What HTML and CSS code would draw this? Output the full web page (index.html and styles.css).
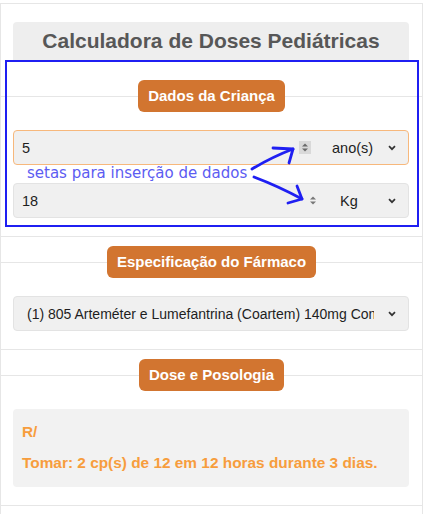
FILE: index.html
```html
<!DOCTYPE html>
<html lang="pt">
<head>
<meta charset="utf-8">
<title>Calculadora de Doses Pediátricas</title>
<link rel="stylesheet" href="styles.css">
</head>
<body>
<div class="card">
  <div class="head">
    <h1 class="title">Calculadora de Doses Pediátricas</h1>
  </div>

  <section class="sec sec-first">
    <div class="legend"><span class="badge">Dados da Criança</span></div>
    <div class="body fields">
      <div class="field field-focus">
        <div class="num">
          <span>5</span>
          <span class="spin spin-hover"><svg width="12" height="13" viewBox="0 0 12 13"><path d="M3 5.5 L6 2.5 L9 5.5 Z" fill="#6a6a6a"/><path d="M3 7.5 L6 10.5 L9 7.5 Z" fill="#6a6a6a"/></svg></span>
        </div>
        <div class="unit unit-age">
          <span>ano(s)</span>
          <svg class="chev" width="8" height="6" viewBox="0 0 8 6"><path d="M1 1.2 L4 4.2 L7 1.2" fill="none" stroke="#333" stroke-width="1.7"/></svg>
        </div>
      </div>
      <div class="field">
        <div class="num">
          <span>18</span>
          <span class="spin"><svg width="12" height="13" viewBox="0 0 12 13"><path d="M3 5.5 L6 2.5 L9 5.5 Z" fill="#777"/><path d="M3 7.5 L6 10.5 L9 7.5 Z" fill="#777"/></svg></span>
        </div>
        <div class="unit unit-weight">
          <span>Kg</span>
          <svg class="chev" width="8" height="6" viewBox="0 0 8 6"><path d="M1 1.2 L4 4.2 L7 1.2" fill="none" stroke="#333" stroke-width="1.7"/></svg>
        </div>
      </div>
    </div>
  </section>

  <section class="sec">
    <div class="legend"><span class="badge">Especificação do Fármaco</span></div>
    <div class="body">
      <div class="field drug">
        <span class="drug-text">(1) 805 Arteméter e Lumefantrina (Coartem) 140mg Comprimido</span>
        <svg class="chev" width="8" height="6" viewBox="0 0 8 6"><path d="M1 1.2 L4 4.2 L7 1.2" fill="none" stroke="#333" stroke-width="1.7"/></svg>
      </div>
    </div>
  </section>

  <section class="sec">
    <div class="legend"><span class="badge">Dose e Posologia</span></div>
    <div class="body">
      <div class="result">
        <p class="rx">R/</p>
        <p class="rx rx-line">Tomar: 2 cp(s) de 12 em 12 horas durante 3 dias.</p>
      </div>
    </div>
  </section>

  <section class="sec sec-end"></section>
</div>

<div class="note-box"></div>
<span class="note-text">setas para inserção de dados</span>
<svg class="note-arrows" width="425" height="514" viewBox="0 0 425 514">
  <g fill="none" stroke="#1f1ff2" stroke-width="2.8" stroke-linecap="round" stroke-linejoin="round">
    <path d="M252 169 Q272 157 293 149"/>
    <path d="M273 148 L293 149 L289 163"/>
    <path d="M254 177 Q278 186 302 199"/>
    <path d="M297 186 L302 199 L288 203"/>
  </g>
</svg>
</body>
</html>
```

FILE: styles.css
```css
* { box-sizing: border-box; }

body {
  margin: 0;
  background: #fff;
  font-family: "Liberation Sans", Arial, sans-serif;
  color: #222;
  position: relative;
  width: 425px;
  height: 514px;
  overflow: hidden;
}

.card {
  margin-top: 3px;
  width: 423px;
  border: 1px solid #e6e6e6;
  border-bottom: none;
}

.head {
  padding: 18px 13px 0 12px;
}

.title {
  margin: 0;
  height: 38px;
  line-height: 38px;
  background: #eeeeee;
  border-radius: 4px 4px 0 0;
  text-align: center;
  font-size: 21px;
  font-weight: bold;
  color: #575757;
}

.sec {
  border-top: 1px solid #e6e6e6;
  padding: 9px 0 18px;
}

.sec-first {
  border-top: none;
  padding-top: 20px;
}

.sec-end {
  height: 20px;
  padding: 0;
}

.legend {
  display: flex;
  align-items: center;
}

.legend::before,
.legend::after {
  content: "";
  flex: 1;
  height: 1px;
  background: #e6e6e6;
}

.badge {
  height: 32px;
  line-height: 32px;
  padding: 0 10px;
  background: #d27530;
  color: #fff;
  font-size: 15px;
  font-weight: bold;
  border-radius: 6px;
}

.body {
  padding: 18px 13px 0 12px;
}

.fields {
  display: flex;
  flex-direction: column;
  gap: 18px;
}

.field {
  height: 35px;
  display: flex;
  align-items: center;
  background: #f0f0f0;
  border: 1px solid #e3e3e3;
  border-radius: 4px;
  font-size: 14.5px;
  color: #1e1e1e;
}

.field-focus {
  border-color: #f7b87c;
}

.num {
  flex: 1;
  height: 100%;
  display: flex;
  align-items: center;
  justify-content: space-between;
  padding-left: 8px;
}

.spin {
  width: 12px;
  height: 13px;
  margin-right: 6px;
  display: flex;
}

.spin-hover {
  background: #d9d9d9;
}

.unit {
  height: 100%;
  display: flex;
  align-items: center;
  justify-content: space-between;
  padding: 0 12px 0 15px;
}

.unit-age { width: 91px; }
.unit-weight { width: 83px; }

.chev { flex: none; }

.drug {
  padding: 0 12px 0 13px;
  font-size: 14px;
}

.drug-text {
  flex: 1;
  overflow: hidden;
  white-space: nowrap;
  margin-right: 14px;
}

.result {
  background: #f2f2f2;
  border-radius: 4px;
  padding: 14px 9px 16px;
}

.rx {
  margin: 0;
  font-size: 15.4px;
  line-height: 17px;
  font-weight: bold;
  color: #f79d3d;
}

.rx-line {
  margin-top: 14px;
}

.note-box {
  position: absolute;
  left: 5px;
  top: 60px;
  width: 414px;
  height: 167px;
  border: 2px solid #1f1ff2;
}

.note-text {
  position: absolute;
  left: 27px;
  top: 164px;
  font-family: "DejaVu Sans", sans-serif;
  font-size: 15px;
  line-height: 18px;
  color: #5c5cf2;
}

.note-arrows {
  position: absolute;
  left: 0;
  top: 0;
  pointer-events: none;
}
```
